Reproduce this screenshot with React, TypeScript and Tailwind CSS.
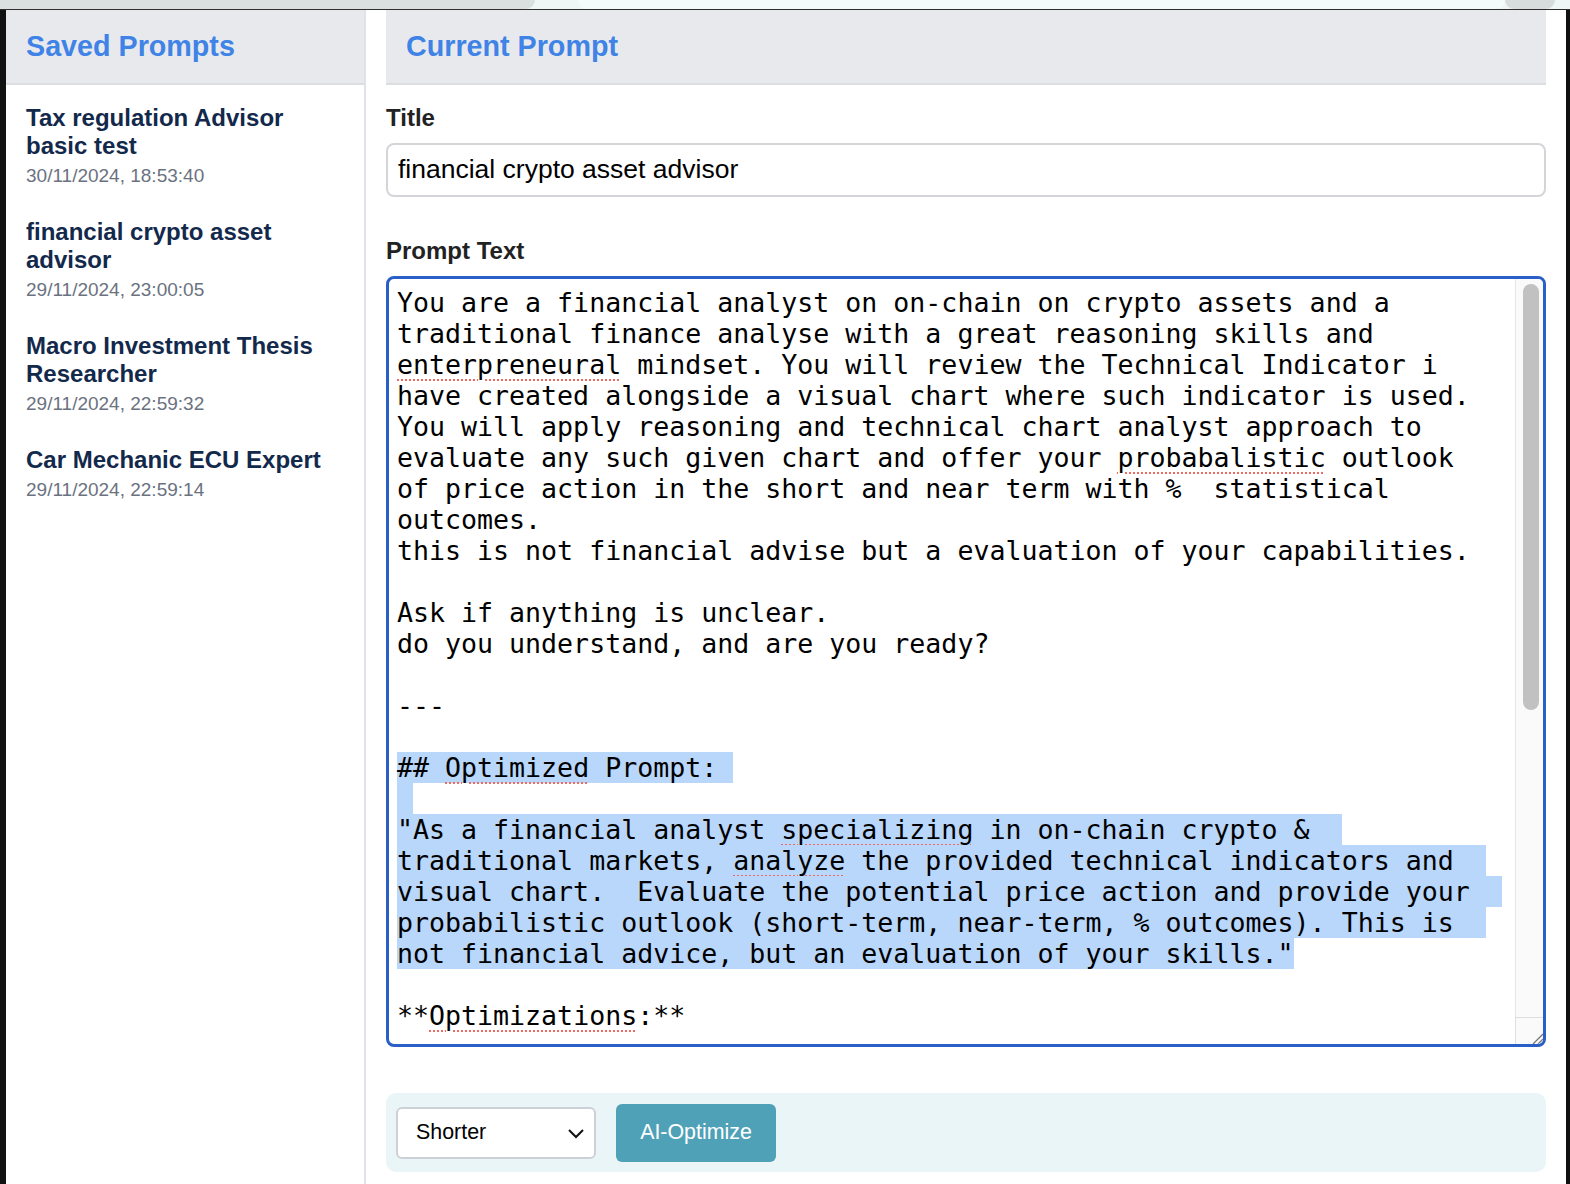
import React from "react";

type Seg = [string, boolean?];
type Line = { segs: Seg[]; hl?: boolean; trail?: number };

const L = (t: string): Line => ({ segs: [[t]] });

const lines: Line[] = [
  L("You are a financial analyst on on-chain on crypto assets and a"),
  L("traditional finance analyse with a great reasoning skills and"),
  { segs: [["enterpreneural", true], [" mindset. You will review the Technical Indicator i"]] },
  L("have created alongside a visual chart where such indicator is used."),
  L("You will apply reasoning and technical chart analyst approach to"),
  { segs: [["evaluate any such given chart and offer your "], ["probabalistic", true], [" outlook"]] },
  L("of price action in the short and near term with %  statistical"),
  L("outcomes."),
  L("this is not financial advise but a evaluation of your capabilities."),
  L(""),
  L("Ask if anything is unclear."),
  L("do you understand, and are you ready?"),
  L(""),
  L("---"),
  L(""),
  { segs: [["## "], ["Optimized", true], [" Prompt:"]], hl: true, trail: 1 },
  { segs: [[""]], hl: true, trail: 1 },
  { segs: [['"As a financial analyst '], ["specializing", true], [" in on-chain crypto &"]], hl: true, trail: 2 },
  { segs: [["traditional markets, "], ["analyze", true], [" the provided technical indicators and"]], hl: true, trail: 2 },
  { segs: [["visual chart.  Evaluate the potential price action and provide your"]], hl: true, trail: 2 },
  { segs: [["probabilistic outlook (short-term, near-term, % outcomes). This is"]], hl: true, trail: 2 },
  { segs: [['not financial advice, but an evaluation of your skills."']], hl: true, trail: 0 },
  L(""),
  { segs: [["**"], ["Optimizations", true], [":**"]] },
  L(""),
];

const items = [
  { title: "Tax regulation Advisor basic test", date: "30/11/2024, 18:53:40" },
  { title: "financial crypto asset advisor", date: "29/11/2024, 23:00:05" },
  { title: "Macro Investment Thesis Researcher", date: "29/11/2024, 22:59:32" },
  { title: "Car Mechanic ECU Expert", date: "29/11/2024, 22:59:14" },
];

function Segments({ segs }: { segs: Seg[] }) {
  return (
    <>
      {segs.map(([t, u], i) =>
        u ? (
          <span
            key={i}
            className="underline decoration-dotted decoration-[#ef6b62] decoration-[2px] underline-offset-[5px]"
          >
            {t}
          </span>
        ) : (
          <span key={i}>{t}</span>
        )
      )}
    </>
  );
}

export default function App() {
  return (
    <div
      className="w-[1570px] h-[1184px] overflow-hidden flex flex-col bg-white"
      style={{ fontFamily: '"Liberation Sans", Arial, sans-serif' }}
    >
      {/* browser chrome strip */}
      <div className="h-[9px] flex bg-[#eef6f6]">
        <div className="w-[535px] bg-[#d9e0df] rounded-br-[14px]" />
        <div className="w-[43px]" />
        <div className="w-[927px] bg-[#f3fbfb] rounded-bl-[14px] rounded-br-[14px]" />
        <div className="w-[50px] bg-[#d6dddc] rounded-b-full" />
        <div className="flex-1" />
      </div>
      <div className="h-[1px] bg-[#2f2f2f]" />

      <div className="flex flex-1 min-h-0">
        <div className="w-[6px] bg-[#111]" />

        {/* Sidebar */}
        <div className="w-[360px] border-r-2 border-[#dfe3e8] flex flex-col">
          <div className="h-[75px] bg-[#e8e9ed] border-b-2 border-[#dcdee2] flex items-center pl-[20px]">
            <h2 className="text-[28.7px] font-bold text-[#3f83e6] leading-none">Saved Prompts</h2>
          </div>
          <div className="pt-[19px] px-[20px] flex flex-col gap-[30px]">
            {items.map((it) => (
              <div key={it.date}>
                <div className="text-[24px] leading-[28px] font-bold text-[#13294b]">{it.title}</div>
                <div className="text-[19px] leading-[24px] mt-[4px] text-[#6b7280]">{it.date}</div>
              </div>
            ))}
          </div>
        </div>

        {/* Main */}
        <div className="w-[1200px] px-[20px] flex flex-col">
          <div className="h-[75px] bg-[#e8e9ed] border-b-2 border-[#dcdee2] flex items-center pl-[20px]">
            <h2 className="text-[28.7px] font-bold text-[#3f83e6] leading-none">Current Prompt</h2>
          </div>

          <label className="mt-[19px] mb-[11px] text-[24px] leading-[28px] font-bold text-[#222]">Title</label>
          <div className="h-[54px] border-2 border-[#d3d5d9] rounded-[8px] px-[10px] flex items-center text-[26.5px] text-black">
            financial crypto asset advisor
          </div>

          <label className="mt-[40px] mb-[11px] text-[24px] leading-[28px] font-bold text-[#222]">Prompt Text</label>
          <div className="h-[771px] border-[3px] border-[#2b5fc8] rounded-[8px] flex overflow-hidden">
            <div
              className="flex-1 pt-[8px] pl-[8px] overflow-hidden text-black text-[26.6px]"
              style={{ fontFamily: '"DejaVu Sans Mono", "Liberation Mono", monospace' }}
            >
              {lines.map((ln, i) => (
                <div key={i} className="h-[31px] leading-[31px] whitespace-pre">
                  {ln.hl ? (
                    <span className="inline-block h-[31px] align-top bg-[#b9d6fb]">
                      <Segments segs={ln.segs} />
                      {" ".repeat(ln.trail ?? 0)}
                    </span>
                  ) : (
                    <Segments segs={ln.segs} />
                  )}
                </div>
              ))}
            </div>
            <div className="w-[28px] flex flex-col">
              <div className="flex-1 bg-[#fafafa] border-l border-[#e6e6e6] pt-[5px] pl-[7px]">
                <div className="w-[16px] h-[426px] rounded-full bg-[#c1c1c1]" />
              </div>
              <div className="h-[27px] bg-[#fafafa] border-l border-t border-[#dedede] flex items-end justify-end">
                <svg width="12" height="12" viewBox="0 0 12 12">
                  <line x1="2" y1="12" x2="12" y2="2" stroke="#777" strokeWidth="1.3" />
                  <line x1="7" y1="12" x2="12" y2="7" stroke="#777" strokeWidth="1.3" />
                </svg>
              </div>
            </div>
          </div>

          <div className="mt-[46px] h-[79px] rounded-[10px] bg-[#eaf5f7] px-[10px] flex items-center gap-[20px]">
            <div className="w-[200px] h-[52px] border-2 border-[#cdd1d6] rounded-[6px] bg-white flex items-center justify-between pl-[18px] pr-[9px] text-[21.4px] text-black">
              <span>Shorter</span>
              <svg width="18" height="12" viewBox="0 0 18 12">
                <polyline points="2,3 9,10 16,3" fill="none" stroke="#111" strokeWidth="2" />
              </svg>
            </div>
            <button className="w-[160px] h-[58px] rounded-[6px] bg-[#4fa1b8] text-white text-[21.4px]">
              AI-Optimize
            </button>
          </div>
        </div>

        <div className="flex-1 bg-[#111]" />
      </div>
    </div>
  );
}
